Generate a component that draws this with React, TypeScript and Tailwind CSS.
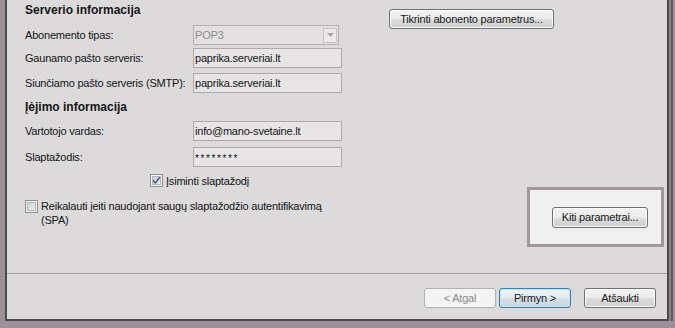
import type { ReactNode } from 'react'

// Vista-style push button: split gradient, thin dark border, rounded corners.
function Button({
  children,
  className = '',
  state = 'normal',
}: {
  children: ReactNode
  className?: string
  state?: 'normal' | 'default' | 'disabled'
}) {
  const look =
    state === 'disabled'
      ? 'border-[#adb2b5] bg-[#f4f4f4] text-[#8a8a8a]'
      : state === 'default'
        ? 'border-[#3c7fb1] bg-[linear-gradient(#eef4f8,#e4ecf2_50%,#d6e0e8_50%,#cad6df)] text-[#1a1a1a] shadow-[inset_0_0_0_1px_#bfe2f7]'
        : 'border-[#707070] bg-[linear-gradient(#f2f2f2,#ebebeb_50%,#dddddd_50%,#cfcfcf)] text-[#1a1a1a] shadow-[inset_0_0_0_1px_#fcfcfc]'
  return (
    <div
      className={`flex shrink-0 items-center justify-center rounded-[3px] border text-[11px] ${look} ${className}`}
    >
      {children}
    </div>
  )
}

function Field({ value, password }: { value: string; password?: boolean }) {
  return (
    <div className="flex h-[20px] w-[149px] items-center border border-[#acaaab] bg-[#e7e5e6] pl-[1px]">
      <span className={password ? 'pt-[3px] text-[10px] tracking-[1.6px]' : ''}>{value}</span>
    </div>
  )
}

function Combo({ value }: { value: string }) {
  return (
    <div className="flex h-[20px] w-[146px] items-center border border-[#b4b2b3] bg-[#e3e1e2] pl-[1px] pr-[1px]">
      <span className="flex-1 text-[#8f8d8e]">{value}</span>
      <div className="flex h-[15px] w-[14px] items-center justify-center border border-[#c6c4c5] bg-[#ebe9ea]">
        <svg width="7" height="4" viewBox="0 0 7 4">
          <path d="M0 0 H7 L3.5 4 Z" fill="#a8a6a7" />
        </svg>
      </div>
    </div>
  )
}

function Check({ checked }: { checked?: boolean }) {
  return (
    <svg width="13" height="13" viewBox="0 0 13 13" className="shrink-0">
      <defs>
        <linearGradient id={checked ? 'cbOn' : 'cbOff'} x1="0" y1="0" x2="1" y2="1">
          <stop offset="0" stopColor="#c9ccd1" />
          <stop offset="1" stopColor="#eef0f2" />
        </linearGradient>
      </defs>
      <rect x="0.5" y="0.5" width="12" height="12" fill="#f4f4f4" stroke="#8e8f8f" />
      <rect
        x="2.5"
        y="2.5"
        width="8"
        height="8"
        fill={`url(#${checked ? 'cbOn' : 'cbOff'})`}
        stroke="#b3b6ba"
      />
      {checked && (
        <path d="M3.2 6.4 L5.4 9 L9.8 3.2" fill="none" stroke="#51648f" strokeWidth="1.7" />
      )}
    </svg>
  )
}

function Row({ label, children, className = '' }: { label: string; children: ReactNode; className?: string }) {
  return (
    <div className={`flex h-[20px] items-center ${className}`}>
      <span className="w-[168px] shrink-0">{label}</span>
      {children}
    </div>
  )
}

export default function App() {
  return (
    <div className="flex h-[328px] w-[675px] bg-[#9c9196] pb-[7px] pl-[5px] pr-[6px] font-['Liberation_Sans',Arial,sans-serif] text-[11px] leading-[14px] tracking-[-0.2px] text-[#151515]">
      <div className="flex flex-1 flex-col border-x-2 border-b-2 border-[#4d4a4b] bg-[#dcdadb] shadow-[2px_0_0_#8a8587,4px_0_0_#5e5b5c]">
        {/* page body */}
        <div className="box-border flex h-[274px] border-b border-[#a2a0a1]">
          <div className="w-[382px] shrink-0 pl-[18px]">
            <div className="pt-[3px] text-[12px] font-bold tracking-normal">Serverio informacija</div>
            <Row label="Abonemento tipas:" className="mt-[8px]">
              <Combo value="POP3" />
            </Row>
            <Row label="Gaunamo pašto serveris:" className="mt-[3px]">
              <Field value="paprika.serveriai.lt" />
            </Row>
            <Row label="Siunčiamo pašto serveris (SMTP):" className="mt-[5px]">
              <Field value="paprika.serveriai.lt" />
            </Row>

            <div className="mt-[7px] text-[12px] font-bold tracking-normal">Įėjimo informacija</div>
            <Row label="Vartotojo vardas:" className="mt-[7px]">
              <Field value="info@mano-svetaine.lt" />
            </Row>
            <Row label="Slaptažodis:" className="mt-[6px]">
              <Field value="********" password />
            </Row>

            <div className="ml-[125px] mt-[7px] flex h-[13px] items-center gap-[3px]">
              <Check checked />
              <span>Įsiminti slaptažodį</span>
            </div>

            <div className="mt-[13px] flex items-start gap-[3px]">
              <Check />
              <span className="-mt-[1px]">
                Reikalauti įeiti naudojant saugų slaptažodžio autentifikavimą
                <br />
                (SPA)
              </span>
            </div>
          </div>

          <div className="flex-1">
            <Button className="mt-[9px] h-[20px] w-[165px]">Tikrinti abonento parametrus...</Button>
            <div className="ml-[138px] mt-[158px] flex h-[60px] w-[137px] items-center justify-end border-[3px] border-[#a3979c] bg-[#f0f0f0] pr-[13px]">
              <Button className="h-[21px] w-[96px]">Kiti parametrai...</Button>
            </div>
          </div>
        </div>

        {/* wizard buttons */}
        <div className="flex flex-1 items-start justify-end pr-[11px] pt-[14px]">
          <Button state="disabled" className="h-[20px] w-[72px]">
            &lt; Atgal
          </Button>
          <Button state="default" className="ml-[3px] h-[20px] w-[72px]">
            Pirmyn &gt;
          </Button>
          <Button className="ml-[13px] h-[20px] w-[72px]">Atšaukti</Button>
        </div>
      </div>
    </div>
  )
}
